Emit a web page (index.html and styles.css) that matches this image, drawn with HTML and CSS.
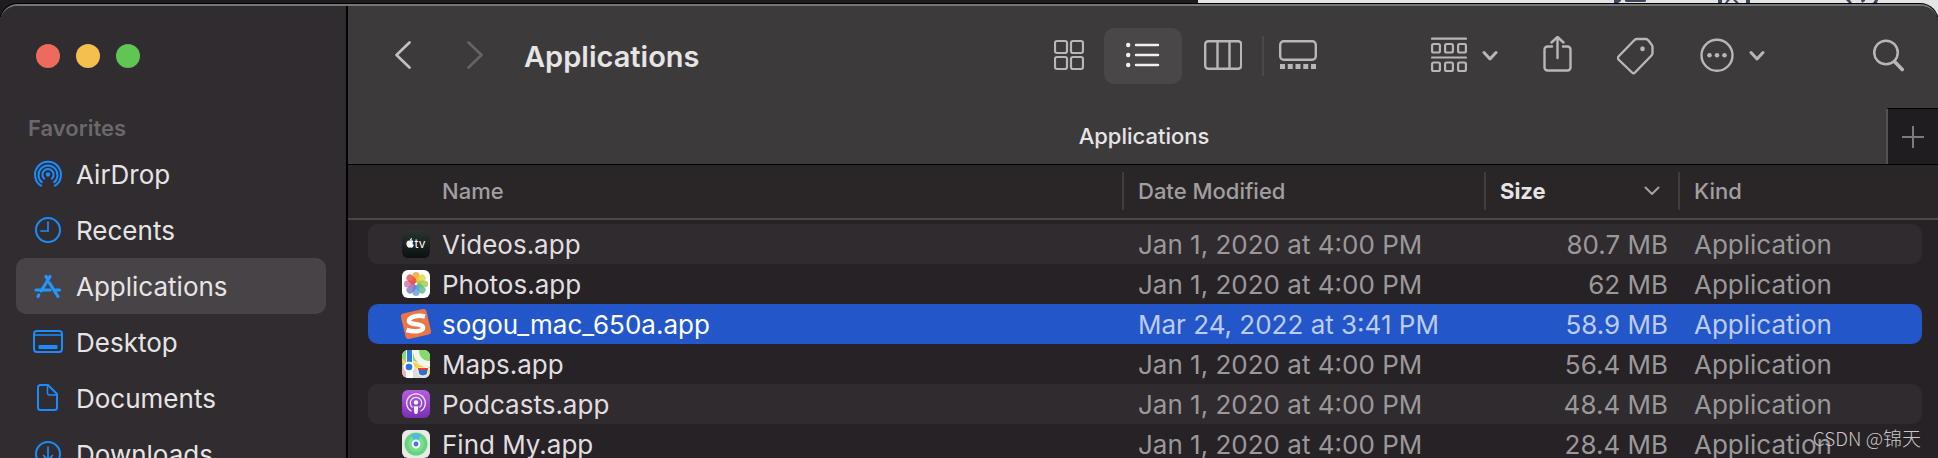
FILE: index.html
```html
<!DOCTYPE html>
<html lang="en">
<head>
    <meta charset="UTF-8">
    <title>Applications</title>
    <link rel="stylesheet" href="styles.css">
</head>
<body>
    <div class="desktop">
        <svg class="desktop-marks" width="264" height="3" viewBox="0 0 264 3" fill="#45435c">
            <path d="M0 0h7v1l-3 2H0zM11 0h21v1q0 1-2 1H13q-2 0-2-1zM104 0h4v3h-4zM132 0h4v3h-4zM113 0h3l-3 3h-2zM119 0h3l3 3h-3zM232 0h4l2 3h-3zM247 0h4v1l-3 2zM261 0h3l-1 3h-4z"/>
        </svg>
    </div>

    <div class="window">
        <aside class="sidebar">
            <div class="lights">
                <button class="light close" aria-label="Close"></button>
                <button class="light minimize" aria-label="Minimize"></button>
                <button class="light zoom" aria-label="Zoom"></button>
            </div>
            <h2 class="section">Favorites</h2>
            <nav class="places">
                <a class="place" href="#airdrop">
                    <svg width="32" height="32" viewBox="0 0 32 32" fill="none" stroke="#1a8cff" stroke-width="2">
                        <circle cx="16" cy="16.500" r="2.200" fill="#1a8cff" stroke="none"/>
                        <path d="M12.800 21.300a5.600 5.600 0 1 1 6.400 0M10.500 24.700a9.500 9.500 0 1 1 11 0M9.800 28.200a13 13 0 1 1 12.400 0"/>
                    </svg>
                    <span>AirDrop</span>
                </a>
                <a class="place" href="#recents">
                    <svg width="32" height="32" viewBox="0 0 32 32" fill="none" stroke="#1a8cff" stroke-width="2">
                        <circle cx="16" cy="16" r="12"/>
                        <path d="M16 8v9H9" stroke-width="1.700" stroke-linecap="round"/>
                    </svg>
                    <span>Recents</span>
                </a>
                <a class="place selected" href="#applications">
                    <svg width="32" height="32" viewBox="0 0 32 32" fill="none" stroke="#2396ff" stroke-width="3.200" stroke-linecap="round">
                        <path d="M18 6.500L9.200 21M14 6.500l2 3M17.500 13L26 26.500M4 20h14M24 20h3.500M6.800 25l-.8 1.500"/>
                    </svg>
                    <span>Applications</span>
                </a>
                <a class="place" href="#desktop">
                    <svg width="32" height="32" viewBox="0 0 32 32" fill="none" stroke="#1a8cff" stroke-width="2">
                        <rect x="2" y="5" width="28" height="21" rx="3"/>
                        <path d="M2 9h28" stroke-width="1.500"/>
                        <rect x="6.500" y="19" width="19" height="4" rx="1" fill="#1a8cff" stroke="none"/>
                    </svg>
                    <span>Desktop</span>
                </a>
                <a class="place" href="#documents">
                    <svg width="32" height="32" viewBox="0 0 32 32" fill="none" stroke="#1a8cff" stroke-width="2" stroke-linejoin="round">
                        <path d="M8.500 3H16l9 9v13.500a2.500 2.500 0 0 1-2.500 2.500h-14A2.500 2.500 0 0 1 6 25.500v-20A2.500 2.500 0 0 1 8.500 3z"/>
                        <path d="M15.500 3v8a2 2 0 0 0 2 2H25" stroke-width="1.500"/>
                    </svg>
                    <span>Documents</span>
                </a>
                <a class="place" href="#downloads">
                    <svg width="32" height="32" viewBox="0 0 32 32" fill="none" stroke="#1a8cff" stroke-width="2">
                        <circle cx="16" cy="16" r="12"/>
                        <path d="M16 9v13M11.500 17.500L16 22l4.500-4.500" stroke-width="1.700" stroke-linecap="round"/>
                    </svg>
                    <span>Downloads</span>
                </a>
            </nav>
        </aside>

        <main class="main">
            <header class="toolbar">
                <div class="history">
                    <button aria-label="Back">
                        <svg width="16" height="40" viewBox="0 0 16 40" fill="none" stroke="#c3c0c2" stroke-width="2.600" stroke-linecap="round" stroke-linejoin="round"><path d="M14.500 6.500L1.500 19l13 12.500"/></svg>
                    </button>
                    <button aria-label="Forward">
                        <svg width="16" height="40" viewBox="0 0 16 40" fill="none" stroke="#676466" stroke-width="2.600" stroke-linecap="round" stroke-linejoin="round"><path d="M1.500 6.500l13 12.500-13 12.500"/></svg>
                    </button>
                </div>
                <h1 class="title">Applications</h1>
                <div class="views">
                    <button aria-label="Icon view">
                        <svg width="30" height="40" viewBox="0 0 30 40" fill="none" stroke="#b9b6b8" stroke-width="2.200">
                            <rect x="1" y="5" width="12" height="12" rx="2"/><rect x="17" y="5" width="12" height="12" rx="2"/>
                            <rect x="1" y="21" width="12" height="12" rx="2"/><rect x="17" y="21" width="12" height="12" rx="2"/>
                        </svg>
                    </button>
                    <button class="active" aria-label="List view">
                        <svg width="34" height="40" viewBox="0 0 34 40" fill="#f2f0f1" stroke="#f2f0f1" stroke-width="2.400" stroke-linecap="round">
                            <path d="M10 9h22M10 19h22M10 29h22"/>
                            <g stroke="none"><circle cx="2.200" cy="9" r="2.200"/><circle cx="2.200" cy="19" r="2.200"/><circle cx="2.200" cy="29" r="2.200"/></g>
                        </svg>
                    </button>
                    <button aria-label="Column view">
                        <svg width="40" height="40" viewBox="0 0 40 40" fill="none" stroke="#b9b6b8" stroke-width="2.400">
                            <rect x="3.200" y="5.200" width="36" height="27.600" rx="3"/><path d="M15.500 5v28M27.500 5v28"/>
                        </svg>
                    </button>
                    <button class="gallery" aria-label="Gallery view">
                        <svg width="38" height="40" viewBox="0 0 38 40" fill="none" stroke="#b9b6b8" stroke-width="2.400">
                            <rect x="1.200" y="5.200" width="35.600" height="18.600" rx="3.500"/>
                            <path d="M1 30.500h36" stroke-width="5" stroke-dasharray="5 2.750"/>
                        </svg>
                    </button>
                </div>
                <div class="actions">
                    <button class="menu-button" aria-label="Group by">
                        <svg width="36" height="40" viewBox="0 0 36 40" fill="none" stroke="#b9b6b8" stroke-width="2.200">
                            <path d="M1 2.700h34M1 21.500h34" stroke-linecap="round"/>
                            <rect x="1.100" y="8" width="7.800" height="8.500" rx="1.500"/><rect x="14.100" y="8" width="7.800" height="8.500" rx="1.500"/><rect x="27.100" y="8" width="7.800" height="8.500" rx="1.500"/>
                            <rect x="1.100" y="26.500" width="7.800" height="8.500" rx="1.500"/><rect x="14.100" y="26.500" width="7.800" height="8.500" rx="1.500"/><rect x="27.100" y="26.500" width="7.800" height="8.500" rx="1.500"/>
                        </svg>
                        <svg width="16" height="40" viewBox="0 0 16 40" fill="none" stroke="#b9b6b8" stroke-width="3" stroke-linecap="round" stroke-linejoin="round"><path d="M2 16.500l6 6.500 6-6.500"/></svg>
                    </button>
                    <button aria-label="Share">
                        <svg width="29" height="40" viewBox="0 0 29 40" fill="none" stroke="#b9b6b8" stroke-width="2.400" stroke-linecap="round" stroke-linejoin="round">
                            <path d="M9 10.500H4.500a3 3 0 0 0-3 3V31.500a3 3 0 0 0 3 3h20a3 3 0 0 0 3-3V13.500a3 3 0 0 0-3-3H20M14.500 22V1M8.500 6.500l6-5.500 6 5.500"/>
                        </svg>
                    </button>
                    <button aria-label="Tags">
                        <svg width="38" height="40" viewBox="0 0 38 40" fill="none" stroke="#b9b6b8" stroke-width="2.400" stroke-linejoin="round">
                            <path d="M20 3h8.500q1.500 0 2.500 1l3.500 4.500q1 1 1 2.500V17q0 1.500-1 2.500L18 36.500q-1.500 1.500-3 0L1.500 23.500q-1.500-1.500 0-3L17.500 4Q18.500 3 20 3z"/>
                            <ellipse cx="25.500" cy="12.700" rx="2.300" ry="2.500" fill="#b9b6b8" stroke="none"/>
                        </svg>
                    </button>
                    <button class="menu-button" aria-label="More">
                        <svg width="34" height="40" viewBox="0 0 34 40" fill="#b9b6b8">
                            <circle cx="17" cy="19.300" r="15.500" fill="none" stroke="#b9b6b8" stroke-width="2.400"/>
                            <circle cx="9.500" cy="19.300" r="2.300"/><circle cx="17" cy="19.300" r="2.300"/><circle cx="24.500" cy="19.300" r="2.300"/>
                        </svg>
                        <svg width="16" height="40" viewBox="0 0 16 40" fill="none" stroke="#b9b6b8" stroke-width="3" stroke-linecap="round" stroke-linejoin="round"><path d="M2 16.500l6 6.500 6-6.500"/></svg>
                    </button>
                </div>
                <button class="search" aria-label="Search">
                    <svg width="31" height="40" viewBox="0 0 31 40" fill="none" stroke="#b9b6b8" stroke-linecap="round">
                        <circle cx="13" cy="16.500" r="11.800" stroke-width="2.500"/><path d="M21.500 25.500l7.700 8" stroke-width="3.600"/>
                    </svg>
                </button>
            </header>

            <div class="tabs">
                <div class="tab">Applications</div>
                <button class="add-tab" aria-label="New tab">
                    <svg width="22" height="22" viewBox="0 0 22 22" stroke="#7c7a7b" stroke-width="2"><path d="M11 0v22M0 11h22"/></svg>
                </button>
            </div>

            <div class="list">
                <table class="files">
                    <colgroup>
                        <col>
                        <col class="col-date">
                        <col class="col-size">
                        <col class="col-kind">
                    </colgroup>
                    <thead>
                        <tr>
                            <th class="name">Name</th>
                            <th>Date Modified</th>
                            <th class="sorted">
                                <div class="sort">Size
                                    <svg width="16" height="10" viewBox="0 0 16 10" fill="none" stroke="#a5a2a4" stroke-width="2" stroke-linecap="round" stroke-linejoin="round"><path d="M1.500 1.500L8 8l6.500-6.500"/></svg>
                                </div>
                            </th>
                            <th>Kind</th>
                        </tr>
                    </thead>
                    <tbody>
                        <tr class="striped">
                            <td class="name"><div class="file">
                                <svg width="28" height="28" viewBox="0 0 28 28">
                                    <defs><linearGradient id="tv" x2="0" y2="1"><stop stop-color="#2b3431"/><stop offset="1" stop-color="#0b1012"/></linearGradient></defs>
                                    <rect width="28" height="28" rx="6" fill="url(#tv)"/>
                                    <path d="M8 10.800c1-.6 2.400-.8 3.500.4-1.300 1-1.200 3 .4 3.800-.5 1.500-1.500 3-2.500 2.800-.8-.3-1.300-.3-2 0-1.500.4-3-2-3-4.200 0-2.500 1.900-3.500 3.600-2.800zM8 10.300c0-1.300.8-2.200 2-2.400.1 1.300-.8 2.300-2 2.400z" fill="#fff"/>
                                    <text class="tv-label" x="12.500" y="18">tv</text>
                                </svg>
                                Videos.app</div></td>
                            <td>Jan 1, 2020 at 4:00 PM</td>
                            <td class="size">80.7 MB</td>
                            <td>Application</td>
                        </tr>
                        <tr>
                            <td class="name"><div class="file">
                                <svg width="28" height="28" viewBox="0 0 28 28">
                                    <rect width="28" height="28" rx="6" fill="#fff"/>
                                    <g fill-opacity=".8">
                                        <rect x="10.500" y="2" width="7" height="11" rx="3.500" fill="#f59d2a"/>
                                        <rect x="10.500" y="2" width="7" height="11" rx="3.500" fill="#dfd53a" transform="rotate(45 14 14)"/>
                                        <rect x="10.500" y="2" width="7" height="11" rx="3.500" fill="#9ccb4b" transform="rotate(90 14 14)"/>
                                        <rect x="10.500" y="2" width="7" height="11" rx="3.500" fill="#55b98a" transform="rotate(135 14 14)"/>
                                        <rect x="10.500" y="2" width="7" height="11" rx="3.500" fill="#5c9fe0" transform="rotate(180 14 14)"/>
                                        <rect x="10.500" y="2" width="7" height="11" rx="3.500" fill="#7a73c4" transform="rotate(225 14 14)"/>
                                        <rect x="10.500" y="2" width="7" height="11" rx="3.500" fill="#c76fb0" transform="rotate(270 14 14)"/>
                                        <rect x="10.500" y="2" width="7" height="11" rx="3.500" fill="#e8483f" transform="rotate(315 14 14)"/>
                                    </g>
                                </svg>
                                Photos.app</div></td>
                            <td>Jan 1, 2020 at 4:00 PM</td>
                            <td class="size">62 MB</td>
                            <td>Application</td>
                        </tr>
                        <tr class="selected">
                            <td class="name"><div class="file">
                                <svg width="28" height="28" viewBox="0 0 28 28" overflow="visible">
                                    <rect x="1" y="1" width="26" height="26" rx="3" fill="#ee7444" transform="rotate(-13 14 14)"/>
                                    <path d="M23 6.500C17 5 8 6 7 10.500c-1 5 14 2.500 14 7C21 22 11 22 4.500 20" fill="none" stroke="#fff" stroke-width="4.500"/>
                                </svg>
                                sogou_mac_650a.app</div></td>
                            <td>Mar 24, 2022 at 3:41 PM</td>
                            <td class="size">58.9 MB</td>
                            <td>Application</td>
                        </tr>
                        <tr>
                            <td class="name"><div class="file">
                                <svg width="28" height="28" viewBox="0 0 28 28">
                                    <defs><clipPath id="map"><rect width="28" height="28" rx="6"/></clipPath></defs>
                                    <g clip-path="url(#map)">
                                        <rect width="28" height="28" fill="#f3efe8"/>
                                        <path d="M0 0h4v15H0z" fill="#8bd672"/><path d="M10 0h18v18L10 10z" fill="#86d96e"/>
                                        <path d="M0 14v14l4-1v-10z" fill="#efb2bd"/>
                                        <path d="M10 11l18 9v5L10 16zM0 8l4 4v4l-4-4z" fill="#fbd04b"/>
                                        <path d="M11 17l17 9v2H11z" fill="#dedcd7"/>
                                        <path d="M14 0c0 9 6 14 14 14" fill="none" stroke="#f5f3ee" stroke-width="6"/>
                                        <path d="M4 0h7v28H4z" fill="#fff"/><path d="M5 0h5v14H5z" fill="#2c7be0"/>
                                        <circle cx="7" cy="17" r="5.500" fill="#fff"/><circle cx="7" cy="17" r="3.300" fill="#2377e6"/>
                                        <path d="M16 18h10v3c0 3-2 5-5 5s-5-2-5-5z" fill="#2f6fc9" stroke="#fff"/><path d="M16 18h10v2H16z" fill="#e1423c"/>
                                    </g>
                                </svg>
                                Maps.app</div></td>
                            <td>Jan 1, 2020 at 4:00 PM</td>
                            <td class="size">56.4 MB</td>
                            <td>Application</td>
                        </tr>
                        <tr class="striped">
                            <td class="name"><div class="file">
                                <svg width="28" height="28" viewBox="0 0 28 28">
                                    <defs><linearGradient id="pod" x2="0" y2="1"><stop stop-color="#b55de2"/><stop offset="1" stop-color="#7a2fb5"/></linearGradient></defs>
                                    <rect width="28" height="28" rx="6" fill="url(#pod)"/>
                                    <g fill="none" stroke="#f3e6fb" stroke-width="1.300"><path d="M9.500 21.300a9.300 9.300 0 1 1 9 0M10.500 17.500a5.700 5.700 0 1 1 7 0"/></g>
                                    <circle cx="14" cy="12.500" r="2.200" fill="#fff"/><path d="M11.700 16.300h4.600l-.6 6.200q-.3 1.500-1.700 1.500t-1.700-1.500z" fill="#fff"/>
                                </svg>
                                Podcasts.app</div></td>
                            <td>Jan 1, 2020 at 4:00 PM</td>
                            <td class="size">48.4 MB</td>
                            <td>Application</td>
                        </tr>
                        <tr>
                            <td class="name"><div class="file">
                                <svg width="28" height="28" viewBox="0 0 28 28">
                                    <rect width="28" height="28" rx="6" fill="#e9e9e9"/>
                                    <circle cx="14" cy="14" r="11.500" fill="#62d67b"/><circle cx="14" cy="14" r="8" fill="#7bdc8f"/>
                                    <path d="M14 14L9 5q5-3 10 0z" fill="#4fb8e8"/>
                                    <circle cx="14" cy="14" r="4.500" fill="#fff"/><circle cx="14" cy="14" r="2.400" fill="#2c7fe8"/>
                                </svg>
                                Find My.app</div></td>
                            <td>Jan 1, 2020 at 4:00 PM</td>
                            <td class="size">28.4 MB</td>
                            <td>Application</td>
                        </tr>
                    </tbody>
                </table>
            </div>
        </main>
    </div>

    <div class="watermark">CSDN @锦天</div>
</body>
</html>
```

FILE: styles.css
```css
* {
    box-sizing: border-box;
}
body {
    display: flex;
    flex-direction: column;
    height: 100vh;
    margin: 0;
    overflow: hidden;
    background: linear-gradient(90deg, #1f1c20 0 61.8%, #e4e3e6 61.8%);
    color: #e6e4e5;
    font-family: Inter, "Noto Sans CJK SC", sans-serif;
    font-size: 26px;
}
button {
    display: flex;
    align-items: center;
    padding: 0;
    border: 0;
    background: none;
}
svg {
    display: block;
    flex: none;
}

/* what shows behind the window */
.desktop {
    display: flex;
    justify-content: flex-end;
    height: 4px;
    flex: none;
    padding-right: 60px;
}

.window {
    display: flex;
    flex: 1;
    min-height: 0;
    overflow: hidden;
    border-top: 2px solid #777576;
    border-radius: 18px 18px 0 0;
    box-shadow: 0 0 0 1px #000;
    background: #262225;
}

/* sidebar */
.sidebar {
    width: 348px;
    flex: none;
    overflow: hidden;
    padding: 38px 20px 0 16px;
    border-right: 2px solid #000;
    background: #302c2f;
}
.lights {
    display: flex;
    gap: 16px;
    padding-left: 20px;
}
.light {
    width: 24px;
    height: 24px;
    border-radius: 50%;
}
.close {
    background: #ed6a5e;
}
.minimize {
    background: #f5bf4f;
}
.zoom {
    background: #61c554;
}
.section {
    margin: 46px 0 4px;
    padding-left: 12px;
    color: #6b686b;
    font-size: 22px;
    font-weight: 600;
    line-height: 28px;
}
.place {
    display: flex;
    align-items: center;
    gap: 12px;
    height: 56px;
    padding-left: 16px;
    border-radius: 10px;
    color: #e6e4e5;
    text-decoration: none;
}
.place.selected {
    background: #474346;
}

/* toolbar */
.main {
    flex: 1;
    min-width: 0;
}
.toolbar {
    display: flex;
    align-items: center;
    height: 100px;
    padding: 0 34px 0 47px;
    background: #3d3a3c;
}
.history {
    display: flex;
    gap: 56px;
}
.title {
    flex: 1;
    margin: 0 0 0 41px;
    font-size: 29px;
    font-weight: 600;
}
.views {
    display: flex;
    align-items: center;
    gap: 20px;
}
.active {
    justify-content: center;
    width: 78px;
    height: 56px;
    border-radius: 10px;
    background: #4a4749;
}
.gallery {
    padding-left: 15px;
    border-left: 2px solid #4a4749;
}
.actions {
    display: flex;
    gap: 45px;
    margin: 0 108px 0 114px;
}
.menu-button {
    gap: 15px;
}

/* tabs */
.tabs {
    display: flex;
    align-items: flex-end;
    height: 59px;
    padding-left: 54px;
    border-bottom: 1px solid #000;
    background: #3d3a3c;
}
.tab {
    flex: 1;
    font-size: 22px;
    font-weight: 500;
    line-height: 56px;
    text-align: center;
}
.add-tab {
    justify-content: center;
    width: 52px;
    height: 56px;
    border-top: 1px solid #000;
    border-left: 2px solid #545153;
    background: #1f1d1f;
}

/* file list */
.list {
    padding: 0 16px 0 20px;
    background: linear-gradient(#2a2628 53px, #4a474a 53px 55px, #262225 55px);
}
.files {
    width: 100%;
    table-layout: fixed;
    border-collapse: separate;
    border-spacing: 0;
}
.col-date {
    width: 362px;
}
.col-size {
    width: 194px;
}
.col-kind {
    width: 244px;
}
.files th {
    height: 59px;
    padding: 0 0 8px 16px;
    background: linear-gradient(#403d3f, #403d3f) no-repeat 0 7px / 2px 38px;
    color: #a19ea0;
    font-size: 22px;
    font-weight: 500;
    text-align: left;
}
.files th.name {
    padding-left: 74px;
    background: none;
}
.files th.sorted {
    color: #e6e4e5;
    font-weight: 700;
}
.sort {
    display: flex;
    align-items: center;
    justify-content: space-between;
    padding-right: 18px;
}
.files td {
    height: 40px;
    padding: 0 0 0 16px;
    color: #9b989a;
    white-space: nowrap;
}
.files td.name {
    padding-left: 34px;
    border-radius: 10px 0 0 10px;
    color: #e0dee0;
}
.files td:last-child {
    border-radius: 0 10px 10px 0;
}
.files td.size {
    padding-right: 10px;
    text-align: right;
}
.file {
    display: flex;
    align-items: center;
    gap: 12px;
}
.striped td {
    background: #2f2b2e;
}
.files .selected td {
    background: #2357c9;
    color: #bccbf0;
}
.files .selected td.name {
    color: #fff;
}
.tv-label {
    fill: #fff;
    font-size: 12px;
}

.watermark {
    position: absolute;
    right: 17px;
    bottom: 6px;
    color: #c9c7c8;
    font-family: "Noto Sans CJK SC", sans-serif;
    font-size: 19px;
    font-weight: 300;
    line-height: 28px;
}
```
